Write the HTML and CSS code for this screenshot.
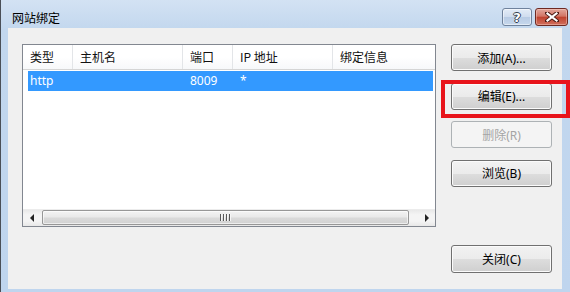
FILE: index.html
```html
<!DOCTYPE html>
<html lang="zh-CN">
<head>
<meta charset="utf-8">
<title>网站绑定</title>
<link rel="stylesheet" href="styles.css">
</head>
<body>
<div class="window">
  <div class="titlebar">
    <span class="title">网站绑定</span>
    <div class="caption-btns">
      <div class="cbtn help"><span class="help-glyph">?</span></div>
      <div class="cbtn close">
        <svg width="14" height="10" viewBox="0 0 14 10">
          <path d="M2 1 L12 9 M12 1 L2 9" stroke="#4a1a14" stroke-width="4" stroke-linecap="square" fill="none"/>
          <path d="M2.5 1.5 L11.5 8.5 M11.5 1.5 L2.5 8.5" stroke="#fff" stroke-width="2.2" stroke-linecap="square" fill="none"/>
        </svg>
      </div>
    </div>
  </div>
  <div class="client">
    <div class="listview">
      <div class="lv-header">
        <div class="hcol w1">类型</div>
        <div class="hcol w2">主机名</div>
        <div class="hcol w3">端口</div>
        <div class="hcol w4">IP 地址</div>
        <div class="hcol w5">绑定信息</div>
      </div>
      <div class="lv-body">
        <div class="lv-row selected">
          <div class="cell c1">http</div>
          <div class="cell c2"></div>
          <div class="cell c3">8009</div>
          <div class="cell c4">*</div>
          <div class="cell c5"></div>
        </div>
      </div>
      <div class="hscroll">
        <div class="sb-arrow"><span class="tri-left"></span></div>
        <div class="sb-track">
          <div class="sb-thumb"><span class="grip"><i></i><i></i><i></i><i></i></span></div>
        </div>
        <div class="sb-arrow"><span class="tri-right"></span></div>
      </div>
    </div>
    <div class="buttons">
      <button class="btn">添加(A)...</button>
      <button class="btn">编辑(E)...</button>
      <button class="btn" disabled>删除(R)</button>
      <button class="btn">浏览(B)</button>
      <button class="btn close-btn">关闭(C)</button>
    </div>
  </div>
  <div class="annotation"></div>
</div>
</body>
</html>
```
FILE: styles.css
```css
* { box-sizing: border-box; }
html, body { margin: 0; padding: 0; }
body {
  width: 570px;
  height: 292px;
  overflow: hidden;
  font-family: "Noto Sans", "Noto Sans CJK SC", sans-serif;
  font-size: 12px;
  color: #000;
  background: #c3d8ee;
}
.window {
  position: relative;
  width: 570px;
  height: 292px;
  background: linear-gradient(#d3e2f3, #c2d7ee 30px, #bfd5ee);
  border-left: 1px solid #4a4f57;
  display: flex;
  flex-direction: column;
}
.titlebar {
  height: 28px;
  display: flex;
  align-items: center;
  justify-content: space-between;
  padding-left: 11px;
  padding-right: 2px;
}
.title {
  font-family: "Noto Sans CJK SC", sans-serif;
  font-size: 12px;
  line-height: 14px;
  color: #000;
  margin-top: 7px;
}
.caption-btns {
  display: flex;
  gap: 3px;
  align-self: flex-start;
  margin-top: 8px;
}
.cbtn {
  height: 18px;
  border-radius: 3px;
  display: flex;
  align-items: center;
  justify-content: center;
}
.help {
  width: 30px;
  border: 1px solid #6f829c;
  background: linear-gradient(#e3ecf7, #cfdcee 50%, #b8cbe4 51%, #c6d7ec);
  box-shadow: inset 0 0 0 1px rgba(255,255,255,0.5);
}
.help-glyph {
  font-family: "DejaVu Sans", sans-serif;
  font-weight: bold;
  font-size: 13px;
  line-height: 13px;
  color: #fff;
  text-shadow: 1px 0 0 #33404f, -1px 0 0 #33404f, 0 1px 0 #33404f, 0 -1px 0 #33404f;
}
.close {
  width: 33px;
  border: 1px solid #6e2a22;
  background: linear-gradient(#e2a79c, #d27565 45%, #c0432f 52%, #d0705e);
  box-shadow: inset 0 0 0 1px rgba(255,220,210,0.4);
}
.client {
  flex: 1;
  margin: 0 8px 3px 7px;
  background: #f0f0f0;
  display: flex;
  padding: 16px 10px 16px 14px;
  gap: 15px;
}
.listview {
  width: 414px;
  height: 183px;
  border: 1px solid #828790;
  background: #fff;
  display: flex;
  flex-direction: column;
}
.lv-header {
  height: 25px;
  display: flex;
  border-bottom: 1px solid #d5d5d5;
  background: linear-gradient(#ffffff, #ffffff 50%, #f7f8fa);
}
.hcol {
  font-family: "Noto Sans CJK SC", sans-serif;
  line-height: 24px;
  padding-left: 7px;
  border-right: 1px solid #e3e5e8;
  color: #111;
  white-space: nowrap;
}
.w1 { width: 50px; }
.w2 { width: 110px; }
.w3 { width: 50px; }
.w4 { width: 100px; }
.w5 { flex: 1; border-right: none; }
.lv-body {
  flex: 1;
  padding: 1px 2px 0 5px;
}
.lv-row {
  height: 20px;
  display: flex;
  align-items: center;
}
.lv-row.selected {
  background: #3399ff;
  color: #fff;
}
.cell {
  line-height: 20px;
  padding-left: 7px;
  white-space: nowrap;
}
.c1 { width: 45px; padding-left: 2px; }
.c2 { width: 110px; }
.c3 { width: 50px; }
.c4 { width: 100px; }
.c5 { flex: 1; }
.hscroll {
  height: 17px;
  display: flex;
  background: linear-gradient(#e8e8e8, #f4f4f4 30%, #f4f4f4 70%, #e8e8e8);
  border-top: 1px solid #ececec;
}
.sb-arrow {
  width: 17px;
  display: flex;
  align-items: center;
  justify-content: center;
}
.tri-left, .tri-right {
  width: 0;
  height: 0;
  border-top: 4px solid transparent;
  border-bottom: 4px solid transparent;
}
.tri-left { border-right: 4px solid #222; }
.tri-right { border-left: 4px solid #222; }
.sb-track {
  flex: 1;
  padding: 0 9px 1px 2px;
  display: flex;
}
.sb-thumb {
  flex: 1;
  border: 1px solid #979797;
  border-radius: 2px;
  background: linear-gradient(#f3f3f3, #e9e9e9 45%, #d9d9d9 55%, #d2d2d2);
  box-shadow: inset 0 0 0 1px rgba(255,255,255,0.6);
  display: flex;
  align-items: center;
  justify-content: center;
}
.grip {
  display: flex;
  gap: 1px;
}
.grip i {
  width: 2px;
  height: 7px;
  background: linear-gradient(90deg, #5a5a5a 50%, #f6f6f6 50%);
}
.buttons {
  width: 101px;
  display: flex;
  flex-direction: column;
  gap: 11.5px;
}
.btn {
  height: 27px;
  width: 101px;
  font-family: "Noto Sans", "Noto Sans CJK SC", sans-serif;
  font-size: 12px;
  color: #000;
  border: 1px solid #707070;
  border-radius: 3px;
  background: linear-gradient(#f2f2f2, #ebebeb 50%, #dddddd 51%, #cfcfcf);
  box-shadow: inset 0 0 0 1px #fbfbfb;
  padding: 0;
  margin: 0;
}
.btn:disabled {
  border-color: #adb2b5;
  background: #f4f4f4;
  color: #a4a4a4;
  box-shadow: none;
}
.close-btn {
  margin-top: auto;
  height: 28px;
}
.annotation {
  position: absolute;
  left: 440px;
  top: 80px;
  width: 129px;
  height: 38px;
  border: 4px solid #e8141b;
}
```
